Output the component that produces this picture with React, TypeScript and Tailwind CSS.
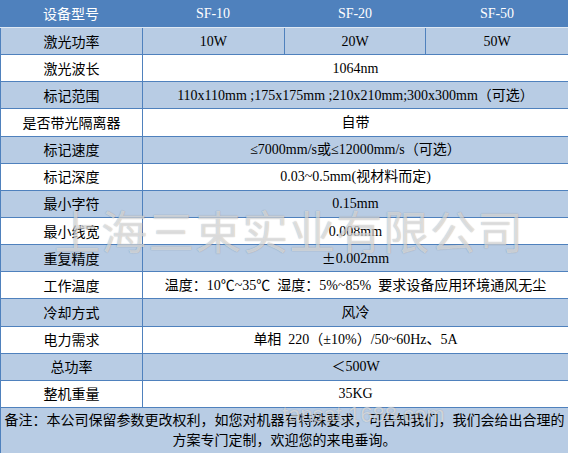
import React from "react";

type Row = { label: string; value?: React.ReactNode; split?: string[] };

const rows: Row[] = [
  { label: "激光功率", split: ["10W", "20W", "50W"] },
  { label: "激光波长", value: "1064nm" },
  { label: "标记范围", value: "110x110mm ;175x175mm ;210x210mm;300x300mm（可选）" },
  { label: "是否带光隔离器", value: "自带" },
  { label: "标记速度", value: "≤7000mm/s或≤12000mm/s（可选）" },
  { label: "标记深度", value: "0.03~0.5mm(视材料而定)" },
  { label: "最小字符", value: "0.15mm" },
  { label: "最小线宽", value: "0.008mm" },
  {
    label: "重复精度",
    value: (
      <>
        <span className="font-['Noto_Sans_CJK_SC',sans-serif]">±</span>0.002mm
      </>
    ),
  },
  { label: "工作温度", value: "温度：10℃~35℃  湿度：5%~85%  要求设备应用环境通风无尘" },
  { label: "冷却方式", value: "风冷" },
  { label: "电力需求", value: "单相  220（±10%）/50~60Hz、5A" },
  { label: "总功率", value: "＜500W" },
  { label: "整机重量", value: "35KG" },
];

export default function App() {
  return (
    <div className="relative w-[568px] h-[453px] overflow-hidden bg-white text-black text-[14px] font-['Liberation_Serif','Noto_Sans_CJK_SC',serif]">
      <div className="grid grid-cols-[142px_142px_142px_142px] h-[27px] bg-[#4f81bd] text-white items-center text-center">
        <div className="font-['Noto_Sans_CJK_SC',sans-serif]">设备型号</div>
        <div>SF-10</div>
        <div>SF-20</div>
        <div>SF-50</div>
      </div>
      <div className="grid grid-rows-[repeat(14,1fr)] h-[381px] border-t border-[#dfe8f3]">
        {rows.map((r, i) => (
          <div
            key={r.label}
            className={
              "grid grid-cols-[142px_1fr] border-b border-l border-[#4f81bd] " +
              (i % 2 === 0 ? "bg-[#b8cce4]" : "bg-white")
            }
          >
            <div className="flex items-center justify-center border-r border-[#4f81bd] font-['Noto_Sans_CJK_SC',sans-serif]">
              {r.label}
            </div>
            {r.split ? (
              <div className="grid grid-cols-3">
                {r.split.map((s, j) => (
                  <div
                    key={s}
                    className={
                      "flex items-center justify-center " + (j < 2 ? "border-r border-[#4f81bd]" : "")
                    }
                  >
                    {s}
                  </div>
                ))}
              </div>
            ) : (
              <div className="flex items-center justify-center whitespace-pre">{r.value}</div>
            )}
          </div>
        ))}
      </div>
      <div className="h-[45px] bg-[#b8cce4] border-l border-[#4f81bd] pt-[1px] text-center leading-[20px] font-['Noto_Sans_CJK_SC',sans-serif]">
        备注：本公司保留参数更改权利，如您对机器有特殊要求，可告知我们，我们会给出合理的
        <br />
        方案专门定制，欢迎您的来电垂询。
      </div>

      <div className="pointer-events-none absolute left-[54px] top-[203px] text-[46px] leading-[52px] tracking-[1px] text-white/60 font-['Noto_Sans_CJK_SC',sans-serif] [text-shadow:0_0_1px_rgba(0,0,0,0.35)] whitespace-nowrap">
        上海三束实业有限公司
      </div>
      <div className="pointer-events-none absolute left-[282px] top-[403px] text-[22px] leading-[24px] text-white/60 font-['Liberation_Sans',sans-serif] [text-shadow:0_0_1px_rgba(0,0,0,0.3)] whitespace-nowrap">
        tansat.1688.com
      </div>
    </div>
  );
}
